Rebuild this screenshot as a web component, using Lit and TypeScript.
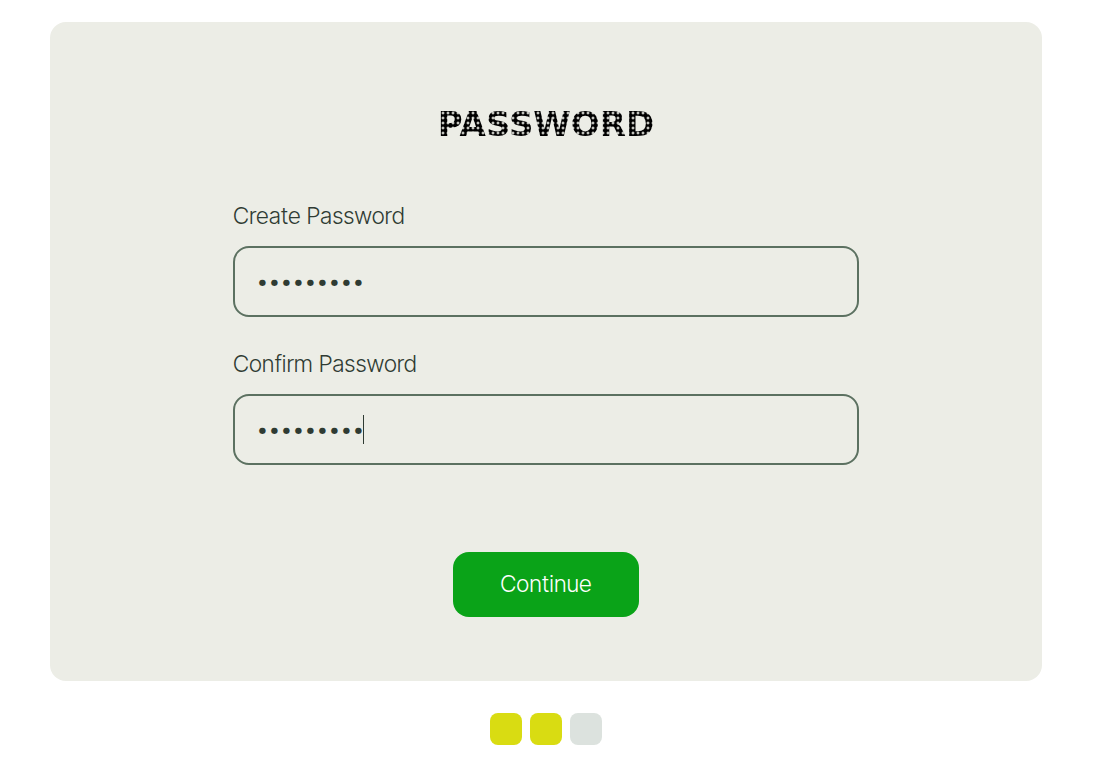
import { LitElement, html, css } from "lit";
import { customElement, property, state } from "lit/decorators.js";
import { classMap } from "lit/directives/class-map.js";

@customElement("password-field")
class PasswordField extends LitElement {
  @property() label = "";
  @property() value = "";
  @property({ type: Boolean }) active = false;

  static styles = css`
    :host { display: block; }
    label {
      display: block;
      font: 300 23px/31px "Inter Tight", Inter, sans-serif;
      margin-bottom: 14px;
    }
    .box { position: relative; }
    input {
      display: block;
      box-sizing: border-box;
      width: 100%;
      height: 71px;
      padding: 0 21px;
      border: 2px solid #5c7161;
      border-radius: 16px;
      outline: none;
      background: transparent;
      color: #2f3b33;
      font: 300 24px/29px "Inter Tight", Inter, sans-serif;
    }
    .caret {
      position: absolute;
      left: 130px;
      top: 21px;
      width: 1px;
      height: 29px;
      background: #2f3b33;
    }
  `;

  render() {
    return html`
      <label for="entry">${this.label}</label>
      <div class="box">
        <input id="entry" type="password" .value=${this.value} />
        ${this.active ? html`<span class="caret"></span>` : ""}
      </div>
    `;
  }
}

@customElement("app-root")
class AppRoot extends LitElement {
  @state() private steps = [true, true, false];

  static styles = css`
    :host {
      display: block;
      padding: 22px 63px 22px 50px;
      font-family: Inter, sans-serif;
      color: #2f3b33;
    }
    .card {
      display: flex;
      flex-direction: column;
      align-items: center;
      padding: 81px 24px 64px;
      border-radius: 16px;
      background: #ecede6;
    }
    h1 {
      margin: 0 0 55px;
      font: 700 34px/43px "DejaVu Sans", sans-serif;
      color: transparent;
      background: radial-gradient(circle at center, #000 2px, transparent 3px) 0 0 / 5px 5px;
      -webkit-background-clip: text;
      background-clip: text;
    }
    form {
      display: flex;
      flex-direction: column;
      align-items: center;
      gap: 32px;
      width: 100%;
      max-width: 626px;
    }
    password-field { width: 100%; }
    button {
      margin-top: 55px;
      padding: 17px 47px;
      border: 0;
      border-radius: 16px;
      background: #0aa318;
      color: #fff;
      font: 300 23px/31px "Inter Tight", Inter, sans-serif;
    }
    .steps {
      display: flex;
      justify-content: center;
      gap: 8px;
      margin-top: 32px;
    }
    .step {
      width: 32px;
      height: 32px;
      border-radius: 8px;
      background: #dce2de;
    }
    .done { background: #d9dc12; }
  `;

  render() {
    return html`
      <main class="card">
        <h1>PASSWORD</h1>
        <form @submit=${(e: Event) => e.preventDefault()}>
          <password-field label="Create Password" value="green-sky"></password-field>
          <password-field label="Confirm Password" value="green-sky" active></password-field>
          <button type="submit">Continue</button>
        </form>
      </main>
      <div class="steps">
        ${this.steps.map((done) => html`<span class=${classMap({ step: true, done })}></span>`)}
      </div>
    `;
  }
}
